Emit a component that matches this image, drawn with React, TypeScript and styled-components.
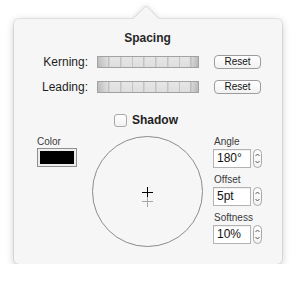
import React from "react";
import styled, { createGlobalStyle } from "styled-components";

const Global = createGlobalStyle`
  html, body { margin: 0; padding: 0; background: #ffffff; }
  body { font-family: "Liberation Sans", Arial, Helvetica, sans-serif; color: #1e1e1e; }
`;

const Stage = styled.div`
  padding: 19px 0 0 14px;
`;

const Popover = styled.div`
  position: relative;
  width: 268px;
  height: 245px;
  box-sizing: border-box;
  background: #f6f6f6;
  border-radius: 5px;
  box-shadow: 0 0 0 1px rgba(0, 0, 0, 0.07), 0 2px 9px rgba(0, 0, 0, 0.22);
  display: flex;
  flex-direction: column;
  padding-top: 12px;

  &::before {
    content: "";
    position: absolute;
    left: 123px;
    top: -9px;
    width: 18px;
    height: 18px;
    background: #f6f6f6;
    transform: rotate(45deg);
    border-top-left-radius: 2px;
    box-shadow: -1px -1px 0 rgba(0, 0, 0, 0.07), -2px -2px 5px rgba(0, 0, 0, 0.08);
  }
  &::after {
    content: "";
    position: absolute;
    left: 110px;
    top: 0;
    width: 44px;
    height: 10px;
    background: #f6f6f6;
  }
`;

const Title = styled.div`
  position: relative;
  z-index: 1;
  text-align: center;
  font-weight: bold;
  font-size: 12px;
  line-height: 14px;
  color: #262626;
  padding-right: 1px;
`;

const SpacingRow = styled.div<{ $top: number }>`
  display: flex;
  align-items: center;
  height: 14px;
  margin-top: ${(p) => p.$top}px;
`;

const RowLabel = styled.div`
  width: 74px;
  text-align: right;
  font-size: 12px;
  line-height: 14px;
  color: #1e1e1e;
`;

const Track = styled.div`
  margin-left: 9px;
  width: 102px;
  height: 12px;
  box-sizing: border-box;
  border: 1px solid #a2a2a2;
  background:
    linear-gradient(to right, rgba(0,0,0,0.16), rgba(0,0,0,0.02) 10px, rgba(0,0,0,0) 12px, rgba(0,0,0,0) calc(100% - 9px), rgba(0,0,0,0.18)),
    repeating-linear-gradient(to right, transparent 0 10px, #c4c4c4 10px 11px, #d2d2d2 11px 11.75px),
    linear-gradient(#e6e6e6, #dedede);
`;

const ResetButton = styled.button`
  margin-left: 15px;
  width: 47px;
  height: 14px;
  box-sizing: border-box;
  padding: 0;
  border: 1px solid #9c9c9c;
  border-radius: 4px;
  background: linear-gradient(#ffffff, #f1f1f1);
  font-family: inherit;
  font-size: 10px;
  line-height: 12px;
  color: #111;
`;

const ShadowRow = styled.label`
  display: flex;
  align-items: center;
  height: 14px;
  margin-top: 19px;
  padding-left: 100px;
  gap: 5px;
  font-weight: bold;
  font-size: 12px;
  color: #1e1e1e;
`;

const CheckBox = styled.span`
  display: block;
  width: 13px;
  height: 13px;
  box-sizing: border-box;
  border: 1px solid #a9a9a9;
  border-radius: 3px;
  background: linear-gradient(#ffffff, #f2f2f2);
`;

const Controls = styled.div`
  display: grid;
  grid-template-columns: 40px 111px 60px;
  column-gap: 15px;
  margin-top: 9px;
  padding-left: 23px;
`;

const SmallLabel = styled.div<{ $top?: number }>`
  font-size: 10px;
  line-height: 12px;
  height: 12px;
  color: #3a3a3a;
  margin-top: ${(p) => p.$top ?? 0}px;
`;

const ColorWell = styled.div`
  width: 40px;
  height: 19px;
  box-sizing: border-box;
  border: 1px solid #8f8f8f;
  padding: 2px;
  background: #ededed;
`;

const Swatch = styled.div`
  width: 100%;
  height: 100%;
  background: #000;
`;

const Dial = styled.svg`
  display: block;
  width: 111px;
  height: 111px;
`;

const RightColumn = styled.div`
  display: flex;
  flex-direction: column;
  margin-left: -5px;
  padding-left: 1px;
`;

const FieldRow = styled.div`
  display: flex;
  align-items: center;
  gap: 2px;
  margin-top: 1px;
  margin-left: -1px;
`;

const NumberBox = styled.div`
  width: 38px;
  height: 19px;
  box-sizing: border-box;
  border: 1px solid #b3b3b3;
  background: #fff;
  box-shadow: inset 0 1px 0 rgba(0,0,0,0.06);
  font-size: 12px;
  line-height: 17px;
  padding-left: 3px;
  color: #111;
`;

const Stepper = styled.div`
  width: 9px;
  height: 19px;
  box-sizing: border-box;
  border: 1px solid #a8a8a8;
  border-radius: 5px;
  background: linear-gradient(#ffffff, #f3f3f3);
  display: flex;
  align-items: center;
  justify-content: center;
`;

const Field: React.FC<{ label: string; value: string; top?: number }> = ({ label, value, top }) => (
  <>
    <SmallLabel $top={top}>{label}</SmallLabel>
    <FieldRow>
      <NumberBox>{value}</NumberBox>
      <Stepper>
        <svg width="7" height="15" viewBox="0 0 7 15">
          <path d="M1.5 5 L3.5 3 L5.5 5" fill="none" stroke="#444" strokeWidth="0.9" />
          <path d="M1.5 10 L3.5 12 L5.5 10" fill="none" stroke="#444" strokeWidth="0.9" />
        </svg>
      </Stepper>
    </FieldRow>
  </>
);

export default function App() {
  return (
    <>
      <Global />
      <Stage>
        <Popover>
          <Title>Spacing</Title>
          <SpacingRow $top={10}>
            <RowLabel>Kerning:</RowLabel>
            <Track />
            <ResetButton>Reset</ResetButton>
          </SpacingRow>
          <SpacingRow $top={11}>
            <RowLabel>Leading:</RowLabel>
            <Track />
            <ResetButton>Reset</ResetButton>
          </SpacingRow>
          <ShadowRow>
            <CheckBox />
            Shadow
          </ShadowRow>
          <Controls>
            <div>
              <SmallLabel>Color</SmallLabel>
              <ColorWell>
                <Swatch />
              </ColorWell>
            </div>
            <Dial viewBox="0 0 111 111">
              <circle cx="55.5" cy="55.5" r="55" fill="none" stroke="#8c8c8c" strokeWidth="1" />
              <line x1="50" y1="65.5" x2="61" y2="65.5" stroke="#a8a8a8" strokeWidth="1" />
              <line x1="55.5" y1="60" x2="55.5" y2="71" stroke="#a8a8a8" strokeWidth="1" />
              <line x1="50" y1="56.5" x2="61" y2="56.5" stroke="#000" strokeWidth="1" />
              <line x1="55.5" y1="51" x2="55.5" y2="61" stroke="#000" strokeWidth="1" />
            </Dial>
            <RightColumn>
              <Field label="Angle" value="180°" />
              <Field label="Offset" value="5pt" top={6} />
              <Field label="Softness" value="10%" top={6} />
            </RightColumn>
          </Controls>
        </Popover>
      </Stage>
    </>
  );
}
